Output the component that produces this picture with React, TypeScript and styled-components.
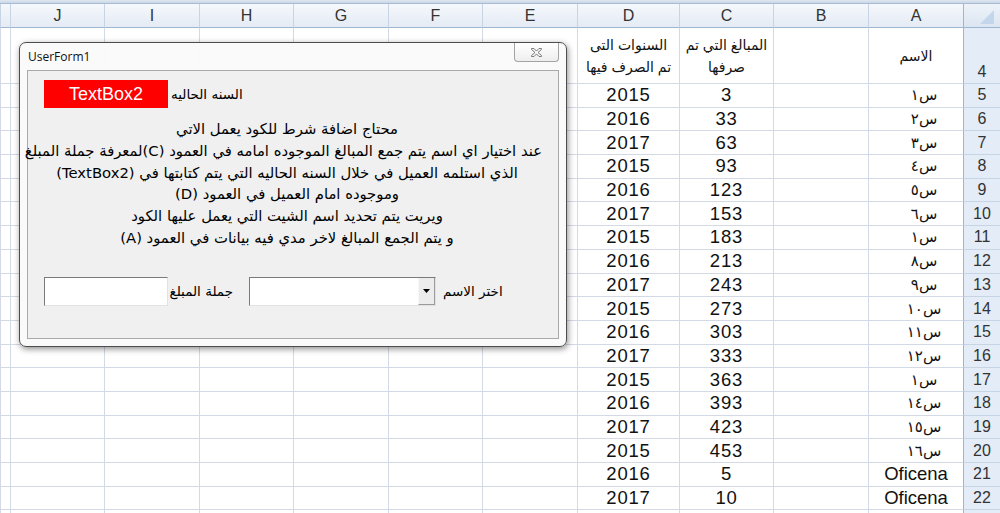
import React from "react";
import styled, { createGlobalStyle } from "styled-components";

const GlobalStyle = createGlobalStyle`
  html, body {
    margin: 0;
    padding: 0;
    background: #ffffff;
    overflow: hidden;
  }
  body {
    font-family: "Liberation Sans", "DejaVu Sans", sans-serif;
  }
  * {
    box-sizing: border-box;
  }
`;

// visual order right to left: row header, A, B, C, D, E ... J, K
const TEMPLATE = "37px 95px 95px 94px 102px 95px 94px 95px 94px 95px 94px 10px";
const LETTERS = ["A", "B", "C", "D", "E", "F", "G", "H", "I", "J", "K"];

const DATA: [number, string, number, number][] = [
  [5, "س١", 3, 2015],
  [6, "س٢", 33, 2016],
  [7, "س٣", 63, 2017],
  [8, "س٤", 93, 2015],
  [9, "س٥", 123, 2016],
  [10, "س٦", 153, 2017],
  [11, "س١", 183, 2015],
  [12, "س٨", 213, 2016],
  [13, "س٩", 243, 2017],
  [14, "س١٠", 273, 2015],
  [15, "س١١", 303, 2016],
  [16, "س١٢", 333, 2017],
  [17, "س١", 363, 2015],
  [18, "س١٤", 393, 2016],
  [19, "س١٥", 423, 2017],
  [20, "س١٦", 453, 2015],
  [21, "Oficena", 5, 2016],
  [22, "Oficena", 10, 2017],
];

const NOTE_LINES = [
  "محتاج اضافة شرط للكود يعمل الاتي",
  "عند اختيار اي اسم يتم  جمع المبالغ الموجوده امامه  في العمود (C)لمعرفة  جملة المبلغ",
  "الذي استلمه العميل في خلال السنه الحاليه التي يتم كتابتها في (TextBox2)",
  "وموجوده امام العميل في العمود (D)",
  "ويريت يتم تحديد اسم الشيت  التي يعمل عليها الكود",
  "و يتم الجمع المبالغ لاخر مدي فيه بيانات في العمود (A)",
];

const App = () => {
  return (
    <>
      <GlobalStyle />
      <Page>
        <Sheet>
          <TopBand />
          <Row $h={24}>
            <Corner>
              <svg width="37" height="24" viewBox="0 0 37 24">
                <polygon points="6,6 6,20 20,20" fill="#c4d6ec" />
              </svg>
            </Corner>
            {LETTERS.map((l) => (
              <ColHead key={l}>{l === "K" ? "" : l}</ColHead>
            ))}
          </Row>
          <Row $h={56}>
            <RowHead $bottom>4</RowHead>
            <Cell>الاسم</Cell>
            <Cell />
            <HeadCell>
              المبالغ التي تم
              <br />
              صرفها
            </HeadCell>
            <HeadCell>
              السنوات التى
              <br />
              تم الصرف فيها
            </HeadCell>
            {LETTERS.slice(4).map((l) => (
              <Cell key={l} />
            ))}
          </Row>
          {DATA.map(([n, name, amount, year]) => (
            <Row $h={23.7} key={n}>
              <RowHead>{n}</RowHead>
              <NameCell $latin={!/[\u0600-\u06ff]/.test(name)}>{name}</NameCell>
              <Cell />
              <NumCell>{amount}</NumCell>
              <NumCell>{year}</NumCell>
              {LETTERS.slice(4).map((l) => (
                <Cell key={l} />
              ))}
            </Row>
          ))}
          <Row $h={10}>
            <RowHead />
            {LETTERS.map((l) => (
              <Cell key={l} />
            ))}
          </Row>
        </Sheet>

        <Window>
          <TitleBar>
            <Title>UserForm1</Title>
            <CloseButton>
              <svg width="13" height="11" viewBox="0 0 13 11">
                <path
                  d="M1.5 1.5 L4 1.5 L6.5 4 L9 1.5 L11.5 1.5 L11.5 2.5 L8 5.5 L11.5 8.5 L11.5 9.5 L9 9.5 L6.5 7 L4 9.5 L1.5 9.5 L1.5 8.5 L5 5.5 L1.5 2.5 Z"
                  fill="#f4f4f4"
                  stroke="#7a7a7a"
                  strokeWidth="1"
                />
              </svg>
            </CloseButton>
          </TitleBar>
          <Client>
            <TopLine>
              <RedBox>TextBox2</RedBox>
              <FormLabel>السنه الحاليه</FormLabel>
            </TopLine>
            <Note>
              {NOTE_LINES.map((line, i) => (
                <NoteLine key={i}>{line}</NoteLine>
              ))}
            </Note>
            <BottomLine>
              <TextInput $w={124} />
              <FormLabel $w={64}>جملة المبلغ</FormLabel>
              <Combo>
                <ComboField />
                <ComboButton>
                  <svg width="7" height="4" viewBox="0 0 7 4">
                    <polygon points="0,0 7,0 3.5,4" fill="#000" />
                  </svg>
                </ComboButton>
              </Combo>
              <FormLabel>اختر الاسم</FormLabel>
            </BottomLine>
          </Client>
        </Window>
      </Page>
    </>
  );
};

const Page = styled.div`
  position: relative;
  width: 1000px;
  height: 513px;
  overflow: hidden;
`;

const Sheet = styled.div`
  display: flex;
  flex-direction: column;
  width: 1000px;
`;

const TopBand = styled.div`
  height: 4px;
  background: linear-gradient(#dfe7f1, #c9d6e6);
  border-bottom: 1px solid #a9bcd3;
`;

const Row = styled.div<{ $h: number }>`
  direction: rtl;
  display: grid;
  grid-template-columns: ${TEMPLATE};
  height: ${(p) => p.$h}px;
  flex-shrink: 0;
`;

const Corner = styled.div`
  background: linear-gradient(#eef3f9, #dbe5f1);
  border-left: 1px solid #9eb6ce;
  border-bottom: 1px solid #9eb6ce;
  overflow: hidden;
  svg {
    display: block;
    transform: scaleX(-1);
  }
`;

const ColHead = styled.div`
  display: flex;
  align-items: center;
  justify-content: center;
  background: linear-gradient(#f5f8fc, #e4ebf4);
  border-left: 1px solid #c6d4e4;
  border-bottom: 1px solid #9eb6ce;
  color: #333333;
  font-size: 16px;
  overflow: hidden;
`;

const RowHead = styled.div<{ $bottom?: boolean }>`
  display: flex;
  align-items: ${(p) => (p.$bottom ? "flex-end" : "center")};
  justify-content: center;
  padding-bottom: ${(p) => (p.$bottom ? "2px" : "0")};
  background: #e4ecf7;
  border-left: 1px solid #9eb6ce;
  border-bottom: 1px solid #c6d4e4;
  color: #333333;
  font-size: 16px;
  overflow: hidden;
`;

const Cell = styled.div`
  display: flex;
  align-items: center;
  justify-content: center;
  border-left: 1px solid #d4dae5;
  border-bottom: 1px solid #d4dae5;
  font-family: "Liberation Sans", "DejaVu Sans", sans-serif;
  font-size: 14px;
  color: #111;
  overflow: hidden;
  white-space: nowrap;
`;

const HeadCell = styled(Cell)`
  text-align: center;
  line-height: 22px;
  font-size: 14px;
`;

const NumCell = styled(Cell)`
  font-size: 18.5px;
  letter-spacing: 0.8px;
`;

const NameCell = styled(Cell)<{ $latin: boolean }>`
  font-size: ${(p) => (p.$latin ? "18.5px" : "15px")};
  padding-left: ${(p) => (p.$latin ? "0" : "16px")};
`;

const Window = styled.div`
  position: absolute;
  left: 19px;
  top: 42px;
  width: 548px;
  height: 305px;
  display: flex;
  flex-direction: column;
  padding: 0 7px 7px 7px;
  background: rgba(250, 250, 250, 0.97);
  border: 1px solid #4d4d4d;
  border-radius: 7px;
  box-shadow: 1px 2px 6px rgba(0, 0, 0, 0.45);
`;

const TitleBar = styled.div`
  height: 27px;
  display: flex;
  align-items: center;
  justify-content: space-between;
  flex-shrink: 0;
`;

const Title = styled.span`
  font-family: "Open Sans", "Liberation Sans", sans-serif;
  font-size: 12px;
  color: #111;
  padding-left: 1px;
`;

const CloseButton = styled.div`
  align-self: flex-start;
  width: 45px;
  height: 19px;
  display: flex;
  align-items: center;
  justify-content: center;
  border: 1px solid #a4a4a4;
  border-top: none;
  border-radius: 0 0 4px 4px;
  background: linear-gradient(#ffffff, #eeeeee);
`;

const Client = styled.div`
  flex: 1;
  display: flex;
  flex-direction: column;
  background: #f0f0f0;
  border: 1px solid #a9a9a9;
  padding: 9px 0 0 16px;
`;

const TopLine = styled.div`
  display: flex;
  align-items: center;
  height: 28px;
`;

const RedBox = styled.div`
  width: 124px;
  height: 28px;
  display: flex;
  align-items: center;
  justify-content: center;
  background: #ff0000;
  color: #ffffff;
  font-size: 18px;
`;

const FormLabel = styled.div<{ $w?: number }>`
  ${(p) => (p.$w ? `width: ${p.$w}px;` : "")}
  direction: rtl;
  padding: 0 3px;
  font-family: "DejaVu Sans", sans-serif;
  font-size: 13.5px;
  color: #000;
  white-space: nowrap;
`;

const Note = styled.div`
  margin: 10px 0 0 -12px;
  width: 510px;
  direction: rtl;
  text-align: center;
  font-family: "DejaVu Sans", sans-serif;
  font-size: 14.8px;
  color: #000;
`;

const NoteLine = styled.div`
  height: 21.8px;
  line-height: 21.8px;
  white-space: nowrap;
`;

const BottomLine = styled.div`
  display: flex;
  align-items: center;
  margin-top: 28px;
  height: 29px;
  gap: 4px;
`;

const TextInput = styled.div<{ $w: number }>`
  width: ${(p) => p.$w}px;
  height: 29px;
  background: #ffffff;
  border-top: 1px solid #7a7a7a;
  border-left: 1px solid #7a7a7a;
  border-right: 1px solid #e2e2e2;
  border-bottom: 1px solid #e2e2e2;
`;

const Combo = styled.div`
  display: flex;
  width: 187px;
  height: 29px;
  margin-left: 9px;
  border-top: 1px solid #7a7a7a;
  border-left: 1px solid #7a7a7a;
  border-right: 1px solid #e2e2e2;
  border-bottom: 1px solid #e2e2e2;
  background: #ffffff;
`;

const ComboField = styled.div`
  flex: 1;
`;

const ComboButton = styled.div`
  width: 17px;
  display: flex;
  align-items: center;
  justify-content: center;
  background: #ececec;
  border-left: 1px solid #f8f8f8;
  border-right: 1px solid #9a9a9a;
  border-bottom: 1px solid #9a9a9a;
`;

export default App;
